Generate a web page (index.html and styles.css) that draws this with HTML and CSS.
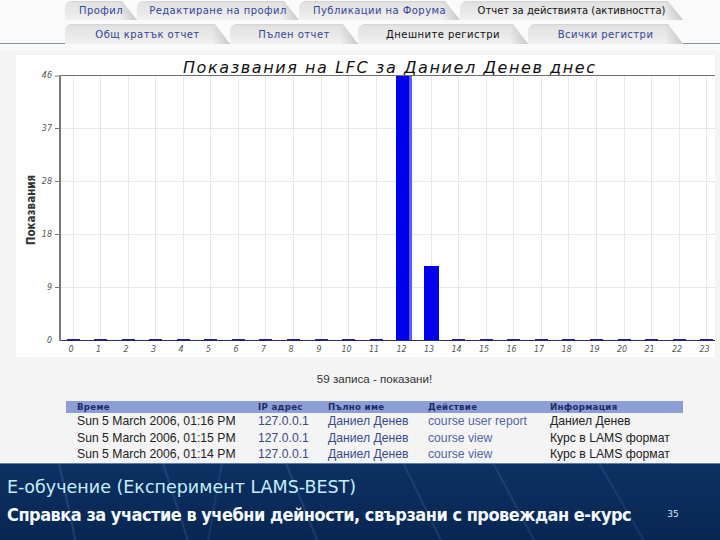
FILE: index.html
```html
<!DOCTYPE html>
<html lang="bg">
<head>
<meta charset="utf-8">
<title>Отчет за действията</title>
<link rel="stylesheet" href="styles.css">
</head>
<body>
<div class="page">
  <div class="tabs">
    <div class="tabrow row1">
      <a class="tab w72">Профил</a>
      <a class="tab w162">Редактиране на профил</a>
      <a class="tab w161">Публикации на Форума</a>
      <a class="tab w223 sel">Отчет за действията (активността)</a>
    </div>
    <div class="tabrow row2">
      <a class="tab w165">Общ кратък отчет</a>
      <a class="tab w128">Пълен отчет</a>
      <a class="tab w170 sel">Днешните регистри</a>
      <a class="tab w155">Всички регистри</a>
    </div>
  </div>

  <div class="chart-wrap">
    <svg class="chart" width="699" height="302" viewBox="16 55 699 302" xmlns="http://www.w3.org/2000/svg">
      <rect x="16" y="55" width="699" height="302" fill="#ffffff"/>
      <g stroke="#e8e8e8" stroke-width="1">
        <line x1="61" y1="128.5" x2="715" y2="128.5"/>
        <line x1="61" y1="181.5" x2="715" y2="181.5"/>
        <line x1="61" y1="234.5" x2="715" y2="234.5"/>
        <line x1="61" y1="287.5" x2="715" y2="287.5"/>
        <line x1="73.5" y1="76" x2="73.5" y2="340"/>
        <line x1="100.5" y1="76" x2="100.5" y2="340"/>
        <line x1="128.5" y1="76" x2="128.5" y2="340"/>
        <line x1="155.5" y1="76" x2="155.5" y2="340"/>
        <line x1="183.5" y1="76" x2="183.5" y2="340"/>
        <line x1="210.5" y1="76" x2="210.5" y2="340"/>
        <line x1="238.5" y1="76" x2="238.5" y2="340"/>
        <line x1="265.5" y1="76" x2="265.5" y2="340"/>
        <line x1="293.5" y1="76" x2="293.5" y2="340"/>
        <line x1="321.5" y1="76" x2="321.5" y2="340"/>
        <line x1="348.5" y1="76" x2="348.5" y2="340"/>
        <line x1="376.5" y1="76" x2="376.5" y2="340"/>
        <line x1="403.5" y1="76" x2="403.5" y2="340"/>
        <line x1="431.5" y1="76" x2="431.5" y2="340"/>
        <line x1="458.5" y1="76" x2="458.5" y2="340"/>
        <line x1="486.5" y1="76" x2="486.5" y2="340"/>
        <line x1="513.5" y1="76" x2="513.5" y2="340"/>
        <line x1="541.5" y1="76" x2="541.5" y2="340"/>
        <line x1="568.5" y1="76" x2="568.5" y2="340"/>
        <line x1="596.5" y1="76" x2="596.5" y2="340"/>
        <line x1="624.5" y1="76" x2="624.5" y2="340"/>
        <line x1="651.5" y1="76" x2="651.5" y2="340"/>
        <line x1="679.5" y1="76" x2="679.5" y2="340"/>
        <line x1="706.5" y1="76" x2="706.5" y2="340"/>
      </g>

      <text class="ctitle" x="389" y="73" text-anchor="middle" textLength="412" lengthAdjust="spacing">Показвания на LFC за Даниел Денев днес</text>
      <line x1="60" y1="75.5" x2="715" y2="75.5" stroke="#6f6f6f" stroke-width="1.2"/>

      <g stroke="#777" stroke-width="1">
        <line x1="55" y1="76" x2="60" y2="76"/>
        <line x1="55" y1="128.5" x2="60" y2="128.5"/>
        <line x1="55" y1="181.5" x2="60" y2="181.5"/>
        <line x1="55" y1="234.5" x2="60" y2="234.5"/>
        <line x1="55" y1="287.5" x2="60" y2="287.5"/>
      </g>
      <g class="ylab" text-anchor="end">
        <text x="52" y="78">46</text>
        <text x="52" y="131">37</text>
        <text x="52" y="184">28</text>
        <text x="52" y="237">18</text>
        <text x="52" y="290">9</text>
        <text x="52" y="343">0</text>
      </g>
      <text class="ytitle" transform="translate(35 210) rotate(-90)" text-anchor="middle">Показвания</text>

      <rect x="396" y="76" width="16" height="264" fill="#0000ee"/>
      <rect x="409" y="76" width="3" height="264" fill="#5a5aff"/>
      <rect x="424" y="266" width="15" height="74" fill="#0000ee"/>

      <line x1="60" y1="340.5" x2="715" y2="340.5" stroke="#2b2b7a" stroke-width="1"/>
      <g fill="#23237a">
        <rect x="67" y="339" width="13" height="2"/>
        <rect x="94" y="339" width="13" height="2"/>
        <rect x="122" y="339" width="13" height="2"/>
        <rect x="149" y="339" width="13" height="2"/>
        <rect x="177" y="339" width="13" height="2"/>
        <rect x="204" y="339" width="13" height="2"/>
        <rect x="232" y="339" width="13" height="2"/>
        <rect x="259" y="339" width="13" height="2"/>
        <rect x="287" y="339" width="13" height="2"/>
        <rect x="315" y="339" width="13" height="2"/>
        <rect x="342" y="339" width="13" height="2"/>
        <rect x="370" y="339" width="13" height="2"/>
        <rect x="452" y="339" width="13" height="2"/>
        <rect x="480" y="339" width="13" height="2"/>
        <rect x="507" y="339" width="13" height="2"/>
        <rect x="535" y="339" width="13" height="2"/>
        <rect x="562" y="339" width="13" height="2"/>
        <rect x="590" y="339" width="13" height="2"/>
        <rect x="618" y="339" width="13" height="2"/>
        <rect x="645" y="339" width="13" height="2"/>
        <rect x="673" y="339" width="13" height="2"/>
        <rect x="700" y="339" width="13" height="2"/>
      </g>
      <line x1="60" y1="76" x2="60" y2="341" stroke="#7a7a7a" stroke-width="2"/>

      <g class="xlab" text-anchor="middle">
        <text x="71" y="352">0</text>
        <text x="98.5" y="352">1</text>
        <text x="126" y="352">2</text>
        <text x="153.5" y="352">3</text>
        <text x="181" y="352">4</text>
        <text x="208.5" y="352">5</text>
        <text x="236" y="352">6</text>
        <text x="263.5" y="352">7</text>
        <text x="291" y="352">8</text>
        <text x="319" y="352">9</text>
        <text x="346.5" y="352">10</text>
        <text x="374" y="352">11</text>
        <text x="401.5" y="352">12</text>
        <text x="429" y="352">13</text>
        <text x="456.5" y="352">14</text>
        <text x="484" y="352">15</text>
        <text x="511.5" y="352">16</text>
        <text x="539" y="352">17</text>
        <text x="566.5" y="352">18</text>
        <text x="594.5" y="352">19</text>
        <text x="622" y="352">20</text>
        <text x="649.5" y="352">21</text>
        <text x="677" y="352">22</text>
        <text x="704.5" y="352">23</text>
      </g>
    </svg>
  </div>

  <p class="count">59 записа - показани!</p>

  <table class="log">
    <colgroup>
      <col class="c1"><col class="c2"><col class="c3"><col class="c4"><col class="c5">
    </colgroup>
    <thead>
      <tr><th>Време</th><th>IP адрес</th><th>Пълно име</th><th>Действие</th><th>Информация</th></tr>
    </thead>
    <tbody>
      <tr><td>Sun 5 March 2006, 01:16 PM</td><td class="lnk">127.0.0.1</td><td class="lnk">Даниел Денев</td><td class="act">course user report</td><td>Даниел Денев</td></tr>
      <tr><td>Sun 5 March 2006, 01:15 PM</td><td class="lnk">127.0.0.1</td><td class="lnk">Даниел Денев</td><td class="act">course view</td><td>Курс в LAMS формат</td></tr>
      <tr><td>Sun 5 March 2006, 01:14 PM</td><td class="lnk">127.0.0.1</td><td class="lnk">Даниел Денев</td><td class="act">course view</td><td>Курс в LAMS формат</td></tr>
    </tbody>
  </table>

  <footer class="slide">
    <div class="slide-title">Е-обучение (Експеримент LAMS-BEST)</div>
    <div class="slide-sub">
      <span class="sub-text">Справка за участие в учебни дейности, свързани с провеждан е-курс</span>
      <span class="slide-num">35</span>
    </div>
  </footer>
</div>
</body>
</html>
```

FILE: styles.css
```css
* { box-sizing: border-box; }
html, body { margin: 0; padding: 0; }
body { background: #f4f4f4; }

.page {
  width: 720px;
  height: 540px;
  overflow: hidden;
  display: flex;
  flex-direction: column;
  background: #f4f4f4;
  font-family: "DejaVu Sans", Verdana, sans-serif;
}

/* ---------- tabs ---------- */
.tabs {
  background: #fafafa;
  height: 50px;
  padding-top: 1px;
}
.tabrow {
  display: flex;
  height: 20px;
}
.row1 { padding-left: 65px; }
.row2 {
  margin-top: 3px;
  padding-left: 65px;
  padding-right: 37px;
  border-bottom: 1px solid #8594aa;
  height: 20px;
}
.tab {
  height: 19px;
  display: flex;
  align-items: center;
  justify-content: center;
  font-size: 10px;
  letter-spacing: 0.45px;
  color: #34459c;
  text-decoration: none;
  white-space: nowrap;
  background:
    linear-gradient(to left, rgba(150,150,150,0.45), rgba(150,150,150,0) 18px),
    linear-gradient(#d2d2d2, #e2e2e2 2px, #e9e9e9 60%, #f2f2f2);
  clip-path: polygon(0 6px, 1px 3px, 3px 1px, 6px 0, calc(100% - 15px) 0, 100% 100%, 0 100%);
}
.row2 .tab { margin-bottom: -1px; height: 20px; }
.tab.sel { color: #111; }

.w72 { width: 72px; }
.w162 { width: 162px; }
.w161 { width: 161px; }
.w223 { width: 223px; letter-spacing: 0; }
.w165 { width: 165px; }
.w128 { width: 128px; }
.w170 { width: 170px; }
.w155 { width: 155px; }

/* ---------- chart ---------- */
.chart-wrap {
  margin-top: 5px;
  padding-left: 16px;
}
.chart { display: block; }
.ctitle {
  font-family: "DejaVu Sans", sans-serif;
  font-style: italic;
  font-size: 16px;
  fill: #111;
}
.ylab text, .xlab text {
  font-family: "DejaVu Sans", sans-serif;
  font-style: italic;
  font-size: 8px;
  fill: #555;
}
.ytitle {
  font-family: "DejaVu Sans Condensed", "DejaVu Sans", sans-serif;
  font-weight: bold;
  font-size: 11.5px;
  fill: #333;
}

/* ---------- caption ---------- */
.count {
  margin: 15px 37px 0 66px;
  height: 14px;
  line-height: 14px;
  text-align: center;
  font-family: "Liberation Sans", Arial, sans-serif;
  font-size: 11.6px;
  color: #333;
}

/* ---------- table ---------- */
.log {
  margin: 15px 0 0 66px;
  width: 617px;
  border-collapse: collapse;
  table-layout: fixed;
}
.c1 { width: 181px; }
.c2 { width: 70px; }
.c3 { width: 100px; }
.c4 { width: 122px; }
.c5 { width: 144px; }
.log th {
  background: #8c9ed6;
  height: 12px;
  padding: 0 0 0 11px;
  text-align: left;
  font-family: "DejaVu Sans", Verdana, sans-serif;
  font-size: 8.6px;
  letter-spacing: 0.3px;
  font-weight: bold;
  color: #1c2a66;
  line-height: 12px;
}
.log td {
  height: 16.5px;
  padding: 0 0 0 11px;
  font-family: "Liberation Sans", Arial, sans-serif;
  font-size: 12.2px;
  color: #222;
  white-space: nowrap;
  line-height: 16px;
}
.log td.lnk { color: #3a4a92; }
.log td.act { color: #5565ae; }

/* ---------- slide footer ---------- */
.slide {
  margin-top: auto;
  height: 77px;
  border-top: 1px solid #5f7fa8;
  padding: 13px 0 0 7px;
  color: #fff;
  background:
    linear-gradient(78deg, transparent 10%, rgba(120,160,220,0.22) 10.2%, transparent 10.5%),
    linear-gradient(72deg, transparent 25%, rgba(120,160,220,0.2) 25.2%, transparent 25.5%),
    linear-gradient(68deg, transparent 42%, rgba(120,160,220,0.2) 42.2%, transparent 42.5%),
    linear-gradient(64deg, transparent 58%, rgba(120,160,220,0.18) 58.2%, transparent 58.5%),
    linear-gradient(62deg, transparent 70%, rgba(120,160,220,0.18) 70.2%, transparent 70.5%),
    linear-gradient(60deg, transparent 84%, rgba(120,160,220,0.16) 84.2%, transparent 84.5%),
    linear-gradient(100deg, transparent 30%, rgba(120,160,220,0.14) 30.2%, transparent 30.5%),
    linear-gradient(#0d3164, #082652);
}
.slide-title {
  font-family: "DejaVu Sans", sans-serif;
  font-size: 17.5px;
  line-height: 20px;
  color: #c4eefc;
}
.slide-sub {
  display: flex;
  align-items: center;
  margin-top: 6px;
  height: 22px;
}
.sub-text {
  font-family: "DejaVu Sans Condensed", "DejaVu Sans", sans-serif;
  font-stretch: condensed;
  font-weight: bold;
  font-size: 18px;
  letter-spacing: -0.5px;
  color: #f4f8ff;
  white-space: nowrap;
}
.slide-num {
  margin-left: 36px;
  font-family: "DejaVu Sans", sans-serif;
  font-size: 9px;
  color: #dde6f2;
}
```
